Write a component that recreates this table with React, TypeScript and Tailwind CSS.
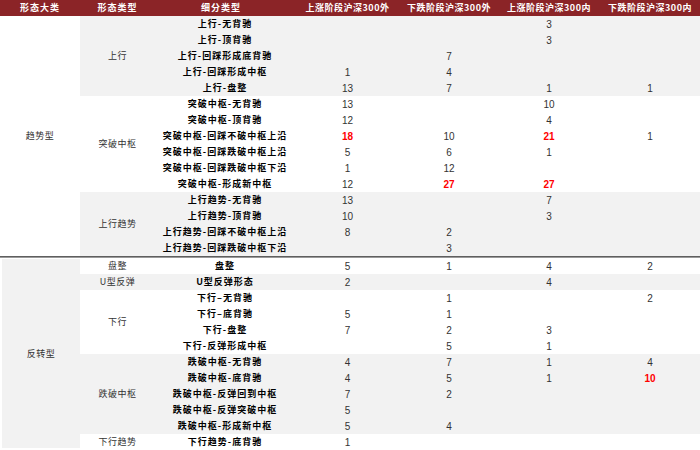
import React from "react";

type Row = { name: string; v: (string | number)[]; red?: number[] };
type Group = { label: string; gray: boolean; rows: Row[] };

const top: Group[] = [
  {
    label: "上行",
    gray: true,
    rows: [
      { name: "上行-无背驰", v: ["", "", 3, ""] },
      { name: "上行-顶背驰", v: ["", "", 3, ""] },
      { name: "上行-回踩形成底背驰", v: ["", 7, "", ""] },
      { name: "上行-回踩形成中枢", v: [1, 4, "", ""] },
      { name: "上行-盘整", v: [13, 7, 1, 1] },
    ],
  },
  {
    label: "突破中枢",
    gray: false,
    rows: [
      { name: "突破中枢-无背驰", v: [13, "", 10, ""] },
      { name: "突破中枢-顶背驰", v: [12, "", 4, ""] },
      { name: "突破中枢-回踩不破中枢上沿", v: [18, 10, 21, 1], red: [0, 2] },
      { name: "突破中枢-回踩跌破中枢上沿", v: [5, 6, 1, ""] },
      { name: "突破中枢-回踩跌破中枢下沿", v: [1, 12, "", ""] },
      { name: "突破中枢-形成新中枢", v: [12, 27, 27, ""], red: [1, 2] },
    ],
  },
  {
    label: "上行趋势",
    gray: true,
    rows: [
      { name: "上行趋势-无背驰", v: [13, "", 7, ""] },
      { name: "上行趋势-顶背驰", v: [10, "", 3, ""] },
      { name: "上行趋势-回踩不破中枢上沿", v: [8, 2, "", ""] },
      { name: "上行趋势-回踩跌破中枢下沿", v: ["", 3, "", ""] },
    ],
  },
];

const bottom: Group[] = [
  { label: "盘整", gray: false, rows: [{ name: "盘整", v: [5, 1, 4, 2] }] },
  { label: "U型反弹", gray: true, rows: [{ name: "U型反弹形态", v: [2, "", 4, ""] }] },
  {
    label: "下行",
    gray: false,
    rows: [
      { name: "下行–无背驰", v: ["", 1, "", 2] },
      { name: "下行–底背驰", v: [5, 1, "", ""] },
      { name: "下行-盘整", v: [7, 2, 3, ""] },
      { name: "下行-反弹形成中枢", v: ["", 5, 1, ""] },
    ],
  },
  {
    label: "跌破中枢",
    gray: true,
    rows: [
      { name: "跌破中枢-无背驰", v: [4, 7, 1, 4] },
      { name: "跌破中枢-底背驰", v: [4, 5, 1, 10], red: [3] },
      { name: "跌破中枢-反弹回到中枢", v: [7, 2, "", ""] },
      { name: "跌破中枢-反弹突破中枢", v: [5, "", "", ""] },
      { name: "跌破中枢-形成新中枢", v: [5, 4, "", ""] },
    ],
  },
  { label: "下行趋势", gray: false, rows: [{ name: "下行趋势-底背驰", v: [1, "", "", ""] }] },
];

const numW = ["w-[105px]", "w-[98px]", "w-[102px]", "w-[100px]"];
const cjk = "font-['Noto_Sans_CJK_SC',sans-serif]";
const num = "font-['Liberation_Sans',Arial,sans-serif]";

function GroupBlock({ g }: { g: Group }) {
  return (
    <div className={`flex ${g.gray ? "bg-[#f2f2f2]" : "bg-white"}`}>
      <div className={`w-[75px] flex items-center justify-center text-[9px] tracking-[0.5px] text-[#333] ${cjk}`}>
        {g.label}
      </div>
      <div className="flex flex-col">
        {g.rows.map((r) => (
          <div key={r.name} className="flex h-4 items-center">
            <div className={`w-[140px] text-center text-[9px] font-bold tracking-[1px] text-black ${cjk}`}>{r.name}</div>
            {r.v.map((x, i) => {
              const red = r.red?.includes(i);
              return (
                <div
                  key={i}
                  className={`${numW[i]} text-center text-[10px] ${num} ${red ? "font-bold text-[#ff0000]" : "text-[#333]"}`}
                >
                  {x}
                </div>
              );
            })}
          </div>
        ))}
      </div>
    </div>
  );
}

export default function App() {
  const heads = ["上涨阶段沪深300外", "下跌阶段沪深300外", "上涨阶段沪深300内", "下跌阶段沪深300内"];
  return (
    <div className={`w-[700px] h-[450px] bg-white overflow-hidden ${cjk}`}>
      <div className="flex h-4 items-center bg-[#8b2427] text-white text-[9px] font-bold tracking-[1px]">
        <div className="w-[80px] text-center">形态大类</div>
        <div className="w-[75px] text-center">形态类型</div>
        <div className="w-[140px] text-center pr-2">细分类型</div>
        {heads.map((h, i) => (
          <div key={h} className={`${numW[i]} text-center tracking-[0.5px]`}>
            {h}
          </div>
        ))}
      </div>

      <div className="flex">
        <div className="w-[80px] flex items-center justify-center text-[9px] tracking-[0.5px] text-[#333]">趋势型</div>
        <div className="flex flex-col">
          {top.map((g) => (
            <GroupBlock key={g.label} g={g} />
          ))}
        </div>
      </div>

      <div className="h-[2px] bg-[#5f5f5f] border-b border-[#9a9a9a]" />

      <div className="flex">
        <div className="w-[80px] pl-[2px] pt-[1px] pb-[2px] flex">
          <div className="flex-1 bg-[#f2f2f2] flex items-center justify-center text-[9px] tracking-[0.5px] text-[#333]">
            反转型
          </div>
        </div>
        <div className="flex flex-col">
          {bottom.map((g) => (
            <GroupBlock key={g.label} g={g} />
          ))}
        </div>
      </div>
    </div>
  );
}
